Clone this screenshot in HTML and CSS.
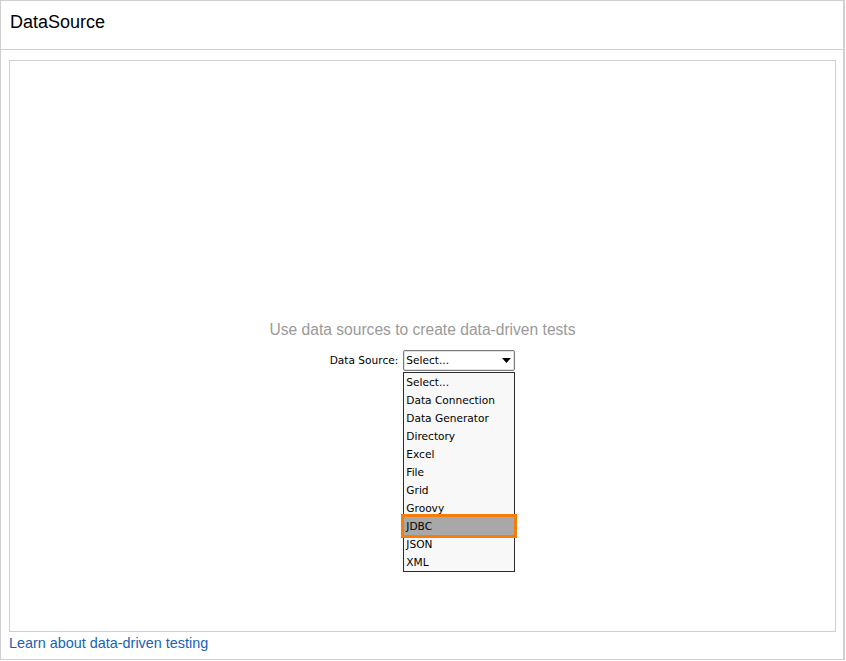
FILE: index.html
```html
<!DOCTYPE html>
<html>
<head>
<meta charset="utf-8">
<link rel="stylesheet" href="styles.css">
</head>
<body>
<div class="panel">
  <div class="header"><span class="title">DataSource</span></div>
  <div class="content">
    <div class="box">
      <div class="center">
        <div class="hint">Use data sources to create data-driven tests</div>
        <div class="row">
          <span class="label">Data Source:</span>
          <div class="select-wrap">
            <div class="select">
              <span>Select...</span>
              <svg class="arrow" width="9" height="5" viewBox="0 0 9 5"><path d="M0 0H9L4.5 5Z" fill="#000"/></svg>
            </div>
            <ul class="list">
              <li>Select...</li>
              <li>Data Connection</li>
              <li>Data Generator</li>
              <li>Directory</li>
              <li>Excel</li>
              <li>File</li>
              <li>Grid</li>
              <li>Groovy</li>
              <li class="selected">JDBC</li>
              <li>JSON</li>
              <li>XML</li>
            </ul>
          </div>
        </div>
      </div>
    </div>
    <a class="learn" href="#">Learn about data-driven testing</a>
  </div>
</div>
</body>
</html>
```
FILE: styles.css
```css
html, body {
  margin: 0;
  padding: 0;
  background: #fff;
}
.panel {
  width: 842px;
  height: 658px;
  border: 1px solid #cfcfcf;
  border-right: 2px solid #cfcfcf;
  display: flex;
  flex-direction: column;
  font-family: "Liberation Sans", Arial, sans-serif;
}
.header {
  height: 48px;
  border-bottom: 1px solid #cfcfcf;
  display: flex;
  align-items: center;
  padding-left: 9px;
}
.title {
  font-size: 18px;
  color: #000;
  position: relative;
  top: -3px;
}
.content {
  flex: 1;
  padding: 10px 7px 0 8px;
  display: flex;
  flex-direction: column;
}
.box {
  height: 570px;
  border: 1px solid #cfcfcf;
  display: flex;
  align-items: center;
  justify-content: center;
}
.center {
  display: flex;
  flex-direction: column;
  align-items: center;
}
.hint {
  font-size: 15.6px;
  color: #9a9a9a;
  line-height: 18px;
  margin-bottom: 10px;
  position: relative;
  top: -1px;
}
.row {
  display: flex;
  align-items: center;
  font-family: "DejaVu Sans", Tahoma, sans-serif;
  font-size: 10.6px;
  color: #000;
}
.label {
  margin-right: 5px;
}
.select-wrap {
  position: relative;
}
.select {
  box-sizing: border-box;
  width: 112px;
  height: 21px;
  border: 1px solid #7a7a7a;
  border-radius: 2px;
  box-shadow: inset 0 0 0 1px #dde3ea;
  background: #fff;
  display: flex;
  align-items: center;
  justify-content: space-between;
  padding: 0 3px 0 2px;
}
.arrow {
  display: block;
}
.list {
  box-sizing: border-box;
  position: absolute;
  left: 0;
  top: 22px;
  width: 112px;
  margin: 0;
  padding: 0;
  list-style: none;
  border: 1px solid #2b2b2b;
  background: #f8f8f8;
}
.list li {
  height: 18px;
  line-height: 18px;
  padding-left: 2px;
  white-space: nowrap;
  overflow: hidden;
}
.list li.selected {
  background: #a8a8a8;
  outline: 3px solid #f57d0a;
  outline-offset: 0;
  position: relative;
}
.learn {
  font-size: 14.4px;
  color: #1563b8;
  text-decoration: none;
  margin-top: 3px;
  line-height: 16px;
  align-self: flex-start;
}
```
